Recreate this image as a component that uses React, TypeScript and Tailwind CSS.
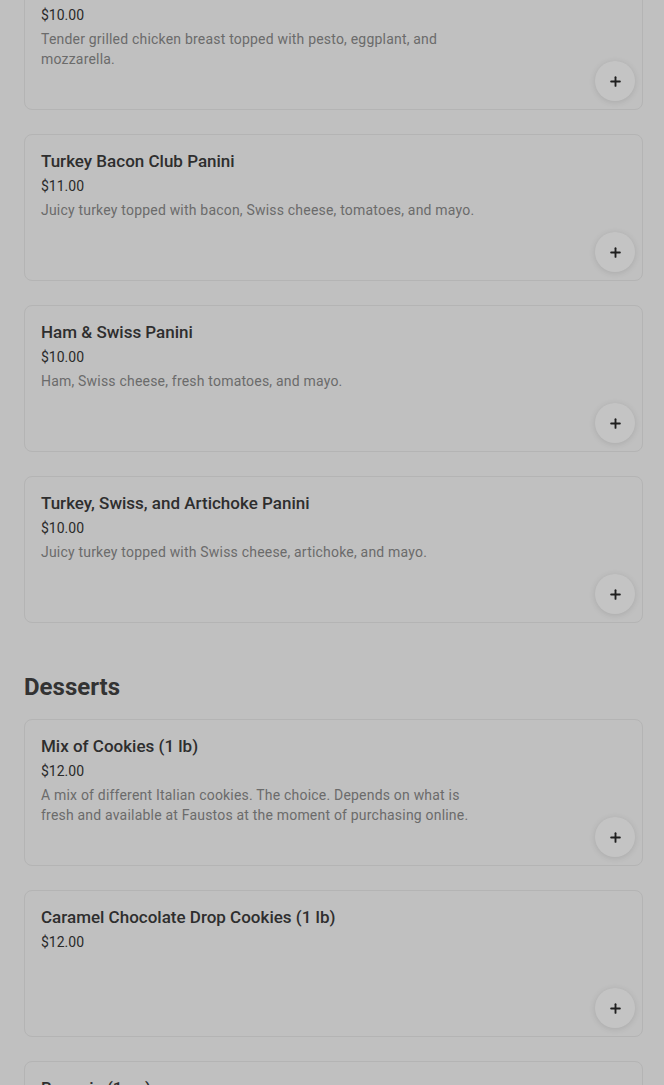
import { Plus } from "lucide-react";

type Item = { name: string; price: string; desc?: string };

const paninis: Item[] = [
  {
    name: "Pesto Chicken Panini",
    price: "$10.00",
    desc: "Tender grilled chicken breast topped with pesto, eggplant, and mozzarella.",
  },
  {
    name: "Turkey Bacon Club Panini",
    price: "$11.00",
    desc: "Juicy turkey topped with bacon, Swiss cheese, tomatoes, and mayo.",
  },
  { name: "Ham & Swiss Panini", price: "$10.00", desc: "Ham, Swiss cheese, fresh tomatoes, and mayo." },
  {
    name: "Turkey, Swiss, and Artichoke Panini",
    price: "$10.00",
    desc: "Juicy turkey topped with Swiss cheese, artichoke, and mayo.",
  },
];

const desserts: Item[] = [
  {
    name: "Mix of Cookies (1 lb)",
    price: "$12.00",
    desc: "A mix of different Italian cookies. The choice. Depends on what is fresh and available at Faustos at the moment of purchasing online.",
  },
  { name: "Caramel Chocolate Drop Cookies (1 lb)", price: "$12.00" },
  { name: "Brownie (1 pc)", price: "$4.00", desc: "Rich chocolate fudge brownie." },
];

function MenuCard({ item }: { item: Item }) {
  return (
    <div className="flex h-[147px] flex-col rounded-lg border border-[#b4b4b4] bg-[#c0c0c0] pl-4 pr-[7px] pt-4 pb-2">
      <div className="min-h-0 flex-1">
        <p className="text-[17px] font-medium leading-5 text-[#2e2e2e]">{item.name}</p>
        <p className="mt-[5px] text-sm leading-5 text-[#2a2a2a]">{item.price}</p>
        {item.desc && (
          <p className="mt-1 max-w-[445px] text-sm leading-5 tracking-[0.2px] text-[#6b6b6b]">{item.desc}</p>
        )}
      </div>
      <div className="flex justify-end">
        <button className="flex h-10 w-10 items-center justify-center rounded-full bg-[#c4c4c4] shadow-[0_1px_6px_rgba(0,0,0,0.12)]">
          <Plus className="h-[15px] w-[15px] text-[#1f1f1f]" strokeWidth={3} />
        </button>
      </div>
    </div>
  );
}

export default function App() {
  return (
    <div
      className="h-[1085px] overflow-hidden bg-[#c0c0c0] px-6"
      style={{ fontFamily: "Roboto, 'Noto Sans', sans-serif" }}
    >
      <div className="mr-[-3px] mt-[-37px] flex flex-col gap-6">
        {paninis.map((item) => (
          <MenuCard key={item.name} item={item} />
        ))}
      </div>
      <h2 className="mt-[50px] text-2xl font-bold leading-7 text-[#333]">Desserts</h2>
      <div className="mr-[-3px] mt-[18px] flex flex-col gap-6">
        {desserts.map((item) => (
          <MenuCard key={item.name} item={item} />
        ))}
      </div>
    </div>
  );
}
